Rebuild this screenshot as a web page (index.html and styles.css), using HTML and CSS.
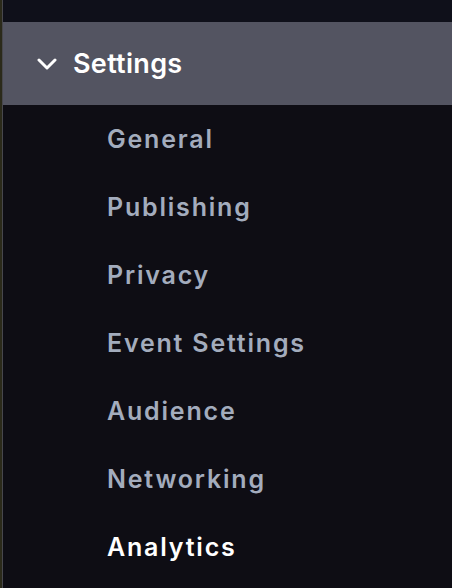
FILE: index.html
```html
<!DOCTYPE html>
<html lang="en">
<head>
    <meta charset="UTF-8">
    <meta name="viewport" content="width=device-width, initial-scale=1.0">
    <title>Settings menu</title>
    <link rel="stylesheet" href="styles.css">
</head>
<body>
    <nav class="sidebar">
        <div class="top-gap"></div>

        <button class="group-toggle" type="button">
            <svg class="chevron" width="20" height="12" viewBox="0 0 20 12" aria-hidden="true">
                <path d="M2 2 L10 10 L18 2" fill="none" stroke="#ffffff" stroke-width="3" stroke-linecap="round" stroke-linejoin="round"/>
            </svg>
            <span>Settings</span>
        </button>

        <ul class="submenu">
            <li><a href="#">General</a></li>
            <li><a href="#">Publishing</a></li>
            <li><a href="#">Privacy</a></li>
            <li><a href="#">Event Settings</a></li>
            <li><a href="#">Audience</a></li>
            <li><a href="#">Networking</a></li>
            <li><a href="#" class="active">Analytics</a></li>
        </ul>
    </nav>
</body>
</html>
```

FILE: styles.css
```css
/* 全体 */
body {
    margin: 0;
    background-color: #2b2a1a;
    font-family: Inter, 'Noto Sans', sans-serif;
    height: 588px;
    overflow: hidden;
}
.sidebar {
    margin-left: 2px;
    border-left: 1px solid #47474d;
    background-color: #0e0d14;
    min-height: 588px;
}
.top-gap {
    height: 22px;
    background-color: #0f101a;
}
/* グループ見出し */
.group-toggle {
    display: flex;
    align-items: center;
    gap: 16px;
    width: 100%;
    height: 83px;
    padding: 0 0 0 34px;
    border: none;
    background-color: #535461;
    color: #ffffff;
    font-family: inherit;
    font-size: 27px;
    font-weight: 600;
    letter-spacing: 0.3px;
    cursor: pointer;
    text-align: left;
}
.chevron {
    flex: none;
}
/* サブメニュー */
.submenu {
    list-style: none;
    margin: 0;
    padding: 0;
}
.submenu li a {
    display: flex;
    align-items: center;
    height: 68px;
    padding-left: 104px;
    color: #a3acbd;
    font-size: 25px;
    font-weight: 600;
    letter-spacing: 1.8px;
    text-decoration: none;
}
.submenu li a.active {
    color: #ffffff;
}
```
